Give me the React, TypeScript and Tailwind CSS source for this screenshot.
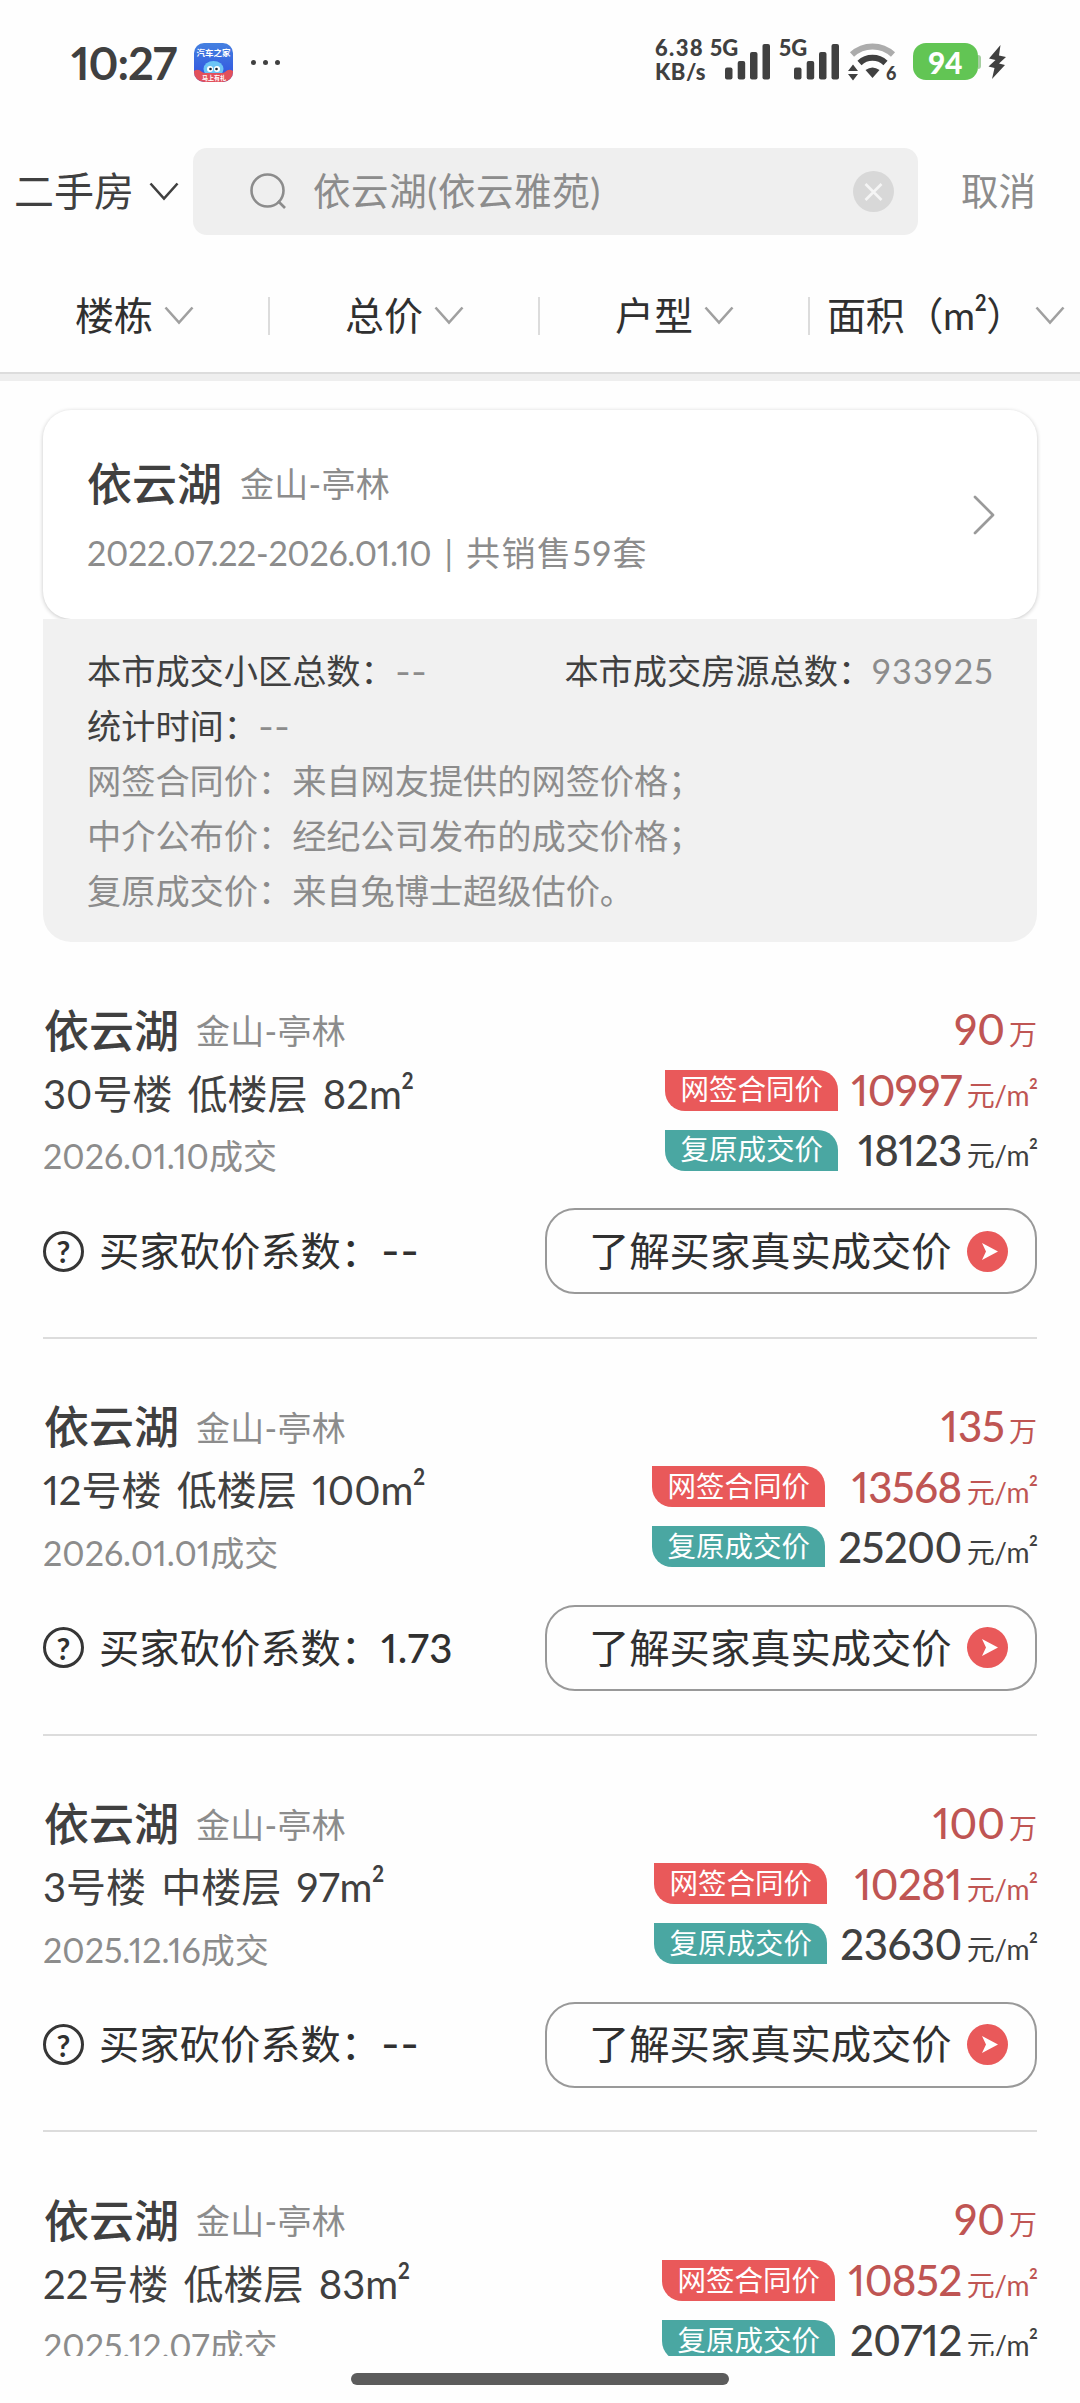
import { ChevronRight } from "lucide-react";

const filters = ["楼栋", "总价", "户型"];

const notes = [
  "网签合同价：来自网友提供的网签价格；",
  "中介公布价：经纪公司发布的成交价格；",
  "复原成交价：来自兔博士超级估价。",
];

const deals = [
  {
    id: 1,
    building: "30号楼 低楼层 82",
    date: "2026.01.10成交",
    total: "90",
    signed: "10997",
    restored: "18123",
    ratio: "",
  },
  {
    id: 2,
    building: "12号楼 低楼层 100",
    date: "2026.01.01成交",
    total: "135",
    signed: "13568",
    restored: "25200",
    ratio: "1.73",
  },
  {
    id: 3,
    building: "3号楼 中楼层 97",
    date: "2025.12.16成交",
    total: "100",
    signed: "10281",
    restored: "23630",
    ratio: "",
  },
  {
    id: 4,
    building: "22号楼 低楼层 83",
    date: "2025.12.07成交",
    total: "90",
    signed: "10852",
    restored: "20712",
    ratio: "",
  },
];

export default function App() {
  return (
    <div className="flex h-[2403px] w-[1080px] flex-col overflow-hidden bg-[#fefefe] font-['Lato','Noto_Sans_CJK_SC',sans-serif] text-[#404040] proportional-nums">
      <StatusBar />
      <SearchHeader />
      <FilterBar />

      <main className="h-[1975px] shrink-0 overflow-hidden px-[43px] pt-[29px]">
        <CommunityCard />
        <StatsPanel />
        {deals.map((deal) => (
          <DealItem key={deal.id} deal={deal} />
        ))}
      </main>

      {/* Home indicator */}
      <div className="flex justify-center pt-[17px]">
        <div className="h-3 w-[378px] rounded-full bg-[#5c5c5c]" />
      </div>
    </div>
  );
}

function StatusBar() {
  return (
    <div className="flex h-[124px] shrink-0 items-start pl-[71px] pt-[43px]">
      <span className="w-[123px] text-[45px] leading-[40px] font-bold tracking-[-1px]">10:27</span>
      <AppIcon />
      <div className="ml-[18px] flex h-[38px] items-center gap-[7px]">
        <i className="size-[5px] rounded-full bg-[#404040]" />
        <i className="size-[5px] rounded-full bg-[#404040]" />
        <i className="size-[5px] rounded-full bg-[#404040]" />
      </div>

      <div className="ml-[375px] flex w-[55px] flex-col text-[22px] leading-[24px] font-black tracking-[0.5px]">
        <span className="-mt-[7px] tracking-[1.4px]">6.38</span>
        <span>KB/s</span>
      </div>
      <Signal />
      <Signal />
      <Wifi />
      <div className="ml-[12px] flex items-center">
        <div className="flex h-[37px] w-[65px] items-center justify-center rounded-[13px] bg-[#62c554] text-[30px] leading-none font-black text-white">
          94
        </div>
        <div className="h-[14px] w-[3px] rounded-r-sm bg-[#a5cfa0]" />
      </div>
      <svg className="ml-[7px] mt-[2px]" width="18" height="34" viewBox="0 0 18 34" fill="#404040">
        <path d="M12.500 0 1 13.500l6.500 1.500-7 6.500 6 1.500L4 34l13-14-6-1.500L18 12l-7-1.500z" />
      </svg>
    </div>
  );
}

function AppIcon() {
  return (
    <svg width="39" height="39" viewBox="0 0 39 39">
      <defs>
        <linearGradient id="sky" x1="0" y1="0" x2="0" y2="1">
          <stop offset="0" stopColor="#4480e0" />
          <stop offset="1" stopColor="#2f4fe0" />
        </linearGradient>
        <clipPath id="tile">
          <rect width="39" height="39" rx="10" />
        </clipPath>
      </defs>
      <g clipPath="url(#tile)">
        <rect width="39" height="39" fill="url(#sky)" />
        <ellipse cx="19.500" cy="26" rx="10" ry="8" fill="#6cc4f5" />
        <circle cx="16" cy="26" r="3" fill="#fff" />
        <circle cx="23" cy="26" r="3" fill="#fff" />
        <circle cx="16.500" cy="26" r="1.300" fill="#123" />
        <circle cx="22.500" cy="26" r="1.300" fill="#123" />
        <path d="M0 28q4-3 8 1l2 1h19l2-1q4-4 8-1v11H0z" fill="#e2505c" />
        <text x="19.500" y="13" fontSize="8.500" fontWeight="700" fill="#fff" textAnchor="middle">
          汽车之家
        </text>
        <text x="20" y="36.500" fontSize="6" fontWeight="700" fill="#fff" textAnchor="middle">
          马上有礼
        </text>
      </g>
    </svg>
  );
}

function Signal() {
  return (
    <div className="flex h-[37px] w-[69px] items-end">
      <span className="-mt-[7px] w-[15px] self-start text-[22px] leading-[24px] font-black">5G</span>
      <svg width="46" height="37" viewBox="0 0 46 37" fill="#404040">
        <rect x="0" y="24.500" width="7.500" height="12" rx="2" />
        <rect x="12.700" y="18" width="7.500" height="18.500" rx="2" />
        <rect x="25" y="9" width="7.500" height="27.500" rx="2" />
        <rect x="37.500" y="1" width="7.500" height="35.500" rx="2" />
      </svg>
    </div>
  );
}

function Wifi() {
  return (
    <svg className="-ml-px overflow-visible" width="54" height="42" viewBox="0 0 54 42" fill="none">
      <path d="M5 11.500a30 30 0 0 1 41 0" stroke="#acacac" strokeWidth="6" />
      <path d="M12.500 20a19 19 0 0 1 26 0" stroke="#404040" strokeWidth="6" />
      <path d="M18.500 27q7-5 14 0l-7 8z" fill="#404040" />
      <path d="M1 28l5-6.500 5 6.500zM1 31l5 6.500 5-6.500z" fill="#404040" />
      <text x="39" y="36.500" fontSize="18" fontWeight="900" fill="#404040">
        6
      </text>
    </svg>
  );
}

function Chevron({ className }: { className: string }) {
  return (
    <svg className={className} width="30" height="19" viewBox="0 0 30 19" fill="none" stroke="currentColor">
      <path d="M1.500 1.500 15 16.500l13.500-15" strokeWidth="2.600" />
    </svg>
  );
}

function SearchHeader() {
  return (
    <div className="flex h-[135px] shrink-0 items-center pb-[1px] pl-[14px]">
      <div className="flex h-[87px] w-[179px] items-center text-[40px] leading-none">
        二手房
        <Chevron className="ml-[15px]" />
      </div>
      <div className="flex h-[87px] w-[725px] items-center rounded-[14px] bg-[#efefef] pl-[57px] pr-[24px] text-[#8c8c8c]">
        <svg width="36" height="36" viewBox="0 0 36 36" fill="none" stroke="currentColor" strokeWidth="2.600">
          <circle cx="17.500" cy="17.500" r="16" />
          <path d="m28 28 7 7" />
        </svg>
        <span className="ml-[27px] flex-1 text-[37.500px] leading-none tracking-[0.6px]">依云湖(依云雅苑)</span>
        <svg width="41" height="41" viewBox="0 0 41 41">
          <circle cx="20.500" cy="20.500" r="20.500" fill="#d8d8d8" />
          <path d="m12.500 13 16 16m0-16-16 16" stroke="#f5f5f5" strokeWidth="2.600" />
        </svg>
      </div>
      <span className="ml-[43px] text-[37.500px] leading-none text-[#8c8c8c]">取消</span>
    </div>
  );
}

function FilterBar() {
  return (
    <>
      <div className="flex h-[113px] shrink-0 items-center text-[39px] leading-none text-[#303030]">
        {filters.map((name) => (
          <div key={name} className="flex h-[38px] w-[270px] items-center border-r-2 border-[#dcdcdc] pl-[75px]">
            {name}
            <Chevron className="ml-[11px] text-[#a0a0a0]" />
          </div>
        ))}
        <div className="flex flex-1 items-center justify-between whitespace-nowrap pr-[15px] pl-[17px]">
          <span className="tracking-[-0.3px]">
            面积（<SquareMetre />）
          </span>
          <Chevron className="-ml-4 shrink-0 text-[#a0a0a0]" />
        </div>
      </div>
      <div className="h-[9px] shrink-0 border-t-2 border-[#dcdcdc] bg-[#eeeeee]" />
    </>
  );
}

function Dashes() {
  return <span className="inline-block origin-left scale-x-125">--</span>;
}

// The exponent is a little taller than the font's own
function SquareMetre() {
  return (
    <span className="tracking-[-1px]">
      m<span className="inline-block origin-bottom-left translate-y-[0.04em] scale-y-115">²</span>
    </span>
  );
}

function CommunityCard() {
  return (
    <section className="flex h-[209px] items-center justify-between rounded-[28px] bg-white pl-[44px] pr-[17px] shadow-[0_1px_4px_rgba(0,0,0,0.22)]">
      <div className="pt-[7px]">
        <div className="flex h-[60px] items-center pt-px leading-none">
          <h1 className="text-[45px] font-medium">依云湖</h1>
          <span className="ml-[18px] text-[34px] tracking-[0.3px] text-[#8c8c8c]">金山-亭林</span>
        </div>
        <p className="mt-[9px] flex h-[60px] items-center text-[34px] leading-none text-[#8c8c8c]">
          <span className="tracking-[-0.3px]">2022.07.22-2026.01.10</span>
          <span className="mx-[13px]">|</span>
          <span className="tracking-[1.5px]">共销售59套</span>
        </p>
      </div>
      <ChevronRight className="text-[#9a9a9a]" size={72} strokeWidth={0.9} />
    </section>
  );
}

function StatsPanel() {
  return (
    <section className="h-[323px] rounded-b-[28px] bg-[#f1f1f1] px-[44px] pt-[24px] text-[34.200px] leading-[55px] text-[#8c8c8c]">
      <div className="flex justify-between">
        <span>
          <span className="text-[#404040]">本市成交小区总数：</span>
          <Dashes />
        </span>
        <span className="-mr-px">
          <span className="text-[#404040]">本市成交房源总数：</span>
          <span className="tracking-[1.2px]">933925</span>
        </span>
      </div>
      <div>
        <span className="text-[#404040]">统计时间：</span>
        <Dashes />
      </div>
      {notes.map((note) => (
        <p key={note}>{note}</p>
      ))}
    </section>
  );
}

function DealItem({ deal }: { deal: (typeof deals)[0] }) {
  return (
    <article className="h-[396.800px] border-b-2 border-[#dcdcdc] pt-[58px]">
      <div className="flex h-[187px] justify-between whitespace-nowrap leading-none">
        <div>
          <div className="flex h-[60px] items-center pt-[2px] pl-px">
            <h2 className="text-[45px] font-medium">依云湖</h2>
            <span className="ml-[17px] text-[34px] tracking-[0.3px] text-[#8c8c8c]">金山-亭林</span>
          </div>
          <p className="flex h-[66px] items-center pt-px text-[40px] [word-spacing:5px]">
            {deal.building}
            <SquareMetre />
          </p>
          <p className="flex h-[60px] items-center text-[34px] text-[#8c8c8c]">{deal.date}</p>
        </div>

        <div className="flex flex-col items-end">
          <div className="flex h-[60px] items-baseline leading-[58px] text-[#bf5553]">
            <span className="text-[42px] font-medium">{deal.total}</span>
            <span className="ml-1 text-[28px]">万</span>
          </div>
          <div className="grid grid-cols-[auto_auto] items-center gap-x-[13px]">
            <span className="flex h-[41px] w-[173px] items-center justify-center rounded-tr-[20px] rounded-bl-[20px] bg-[#e9595a] pb-px text-[28.500px] text-white">
              网签合同价
            </span>
            <Price value={deal.signed} className="text-[#bf5553]" />
            <span className="flex h-[41px] w-[173px] items-center justify-center rounded-tr-[20px] rounded-bl-[20px] bg-[#4aa7a2] pb-px text-[28.500px] text-white">
              复原成交价
            </span>
            <Price value={deal.restored} className="text-[#404040]" />
          </div>
        </div>
      </div>

      <div className="mt-[21px] flex h-[86px] items-center justify-between text-[40.300px] leading-none text-[#303030]">
        <div className="flex items-center">
          <div className="flex size-[41px] items-center justify-center rounded-full border-3 border-[#363636] text-[30px] font-bold">
            ?
          </div>
          <span className="ml-[15px]">买家砍价系数：</span>
          <span className="font-medium tracking-[0.5px]">{deal.ratio || <Dashes />}</span>
        </div>
        <button className="flex h-[86px] w-[492px] items-center rounded-[30px] border-2 border-[#999999] pl-[42px]">
          了解买家真实成交价
          <svg className="ml-[15px]" width="41" height="41" viewBox="0 0 41 41">
            <circle cx="20.500" cy="20.500" r="20.500" fill="#e9595a" />
            <path d="m15 12 16 8.500L15 29l4-8.500z" fill="#fff" />
          </svg>
        </button>
      </div>
    </article>
  );
}

function Price({ value, className }: { value: string; className: string }) {
  return (
    <span className={`flex h-[60px] items-baseline justify-end leading-[60px] ${className}`}>
      <span className="text-[42px] font-medium tracking-[-0.5px]">{value}</span>
      <span className="ml-[5px] text-[28px] tracking-[-0.4px]">
        元/<SquareMetre />
      </span>
    </span>
  );
}
